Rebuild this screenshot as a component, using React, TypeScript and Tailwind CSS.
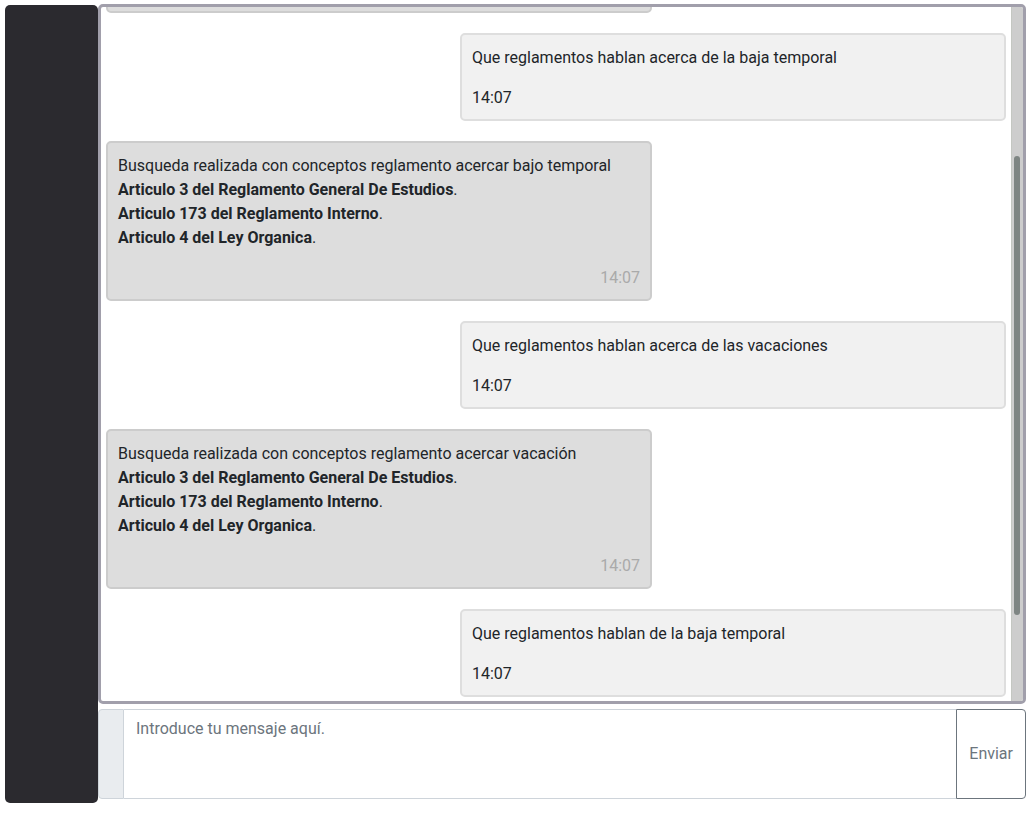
import { useState } from "react";

type Message =
  | { from: "user"; text: string; time: string }
  | { from: "bot"; text: string; articles: string[]; time: string };

const articles = [
  "Articulo 3 del Reglamento General De Estudios",
  "Articulo 173 del Reglamento Interno",
  "Articulo 4 del Ley Organica",
];

const messages: Message[] = [
  { from: "user", text: "Que reglamentos hablan acerca de la baja temporal", time: "14:07" },
  {
    from: "bot",
    text: "Busqueda realizada con conceptos reglamento acercar bajo temporal",
    articles,
    time: "14:07",
  },
  { from: "user", text: "Que reglamentos hablan acerca de las vacaciones", time: "14:07" },
  {
    from: "bot",
    text: "Busqueda realizada con conceptos reglamento acercar vacación",
    articles,
    time: "14:07",
  },
  { from: "user", text: "Que reglamentos hablan de la baja temporal", time: "14:07" },
];

function Bubble({ message }: { message: Message }) {
  if (message.from === "user") {
    return (
      <li className="mx-[5px] w-3/5 shrink-0 self-end rounded-[5px] border-2 border-[#dedede] bg-[#f1f1f1] px-2.5 pt-[11px] pb-[9px]">
        <p className="mb-4">{message.text}</p>
        <time className="block">{message.time}</time>
      </li>
    );
  }
  return (
    <li className="mx-[5px] w-3/5 shrink-0 rounded-[5px] border-2 border-[#cccccc] bg-[#dddddd] px-2.5 pt-[11px] pb-[9px]">
      <p>{message.text}</p>
      <div className="mb-4">
        {message.articles.map((article) => (
          <p key={article}>
            <strong className="font-bold">{article}</strong>.
          </p>
        ))}
      </div>
      <time className="block text-right text-[#aaaaaa]">{message.time}</time>
    </li>
  );
}

export default function App() {
  const [draft, setDraft] = useState("");

  return (
    <div className="flex h-screen bg-white px-[5px] pt-1 pb-[11px] font-['Roboto',sans-serif] text-base text-[#212529]">
      <aside className="mt-px w-[93px] shrink-0 rounded-[5px] bg-[#2b2a2f]" />
      <main className="flex min-w-0 flex-1 flex-col gap-[5px] pb-1">
        <section className="flex min-h-0 flex-1 overflow-hidden rounded-[5px] border-3 border-[#a19fab]">
          <ul className="flex min-w-0 flex-1 flex-col justify-end gap-5 overflow-hidden pb-1">
            <li className="mx-[5px] h-10 w-3/5 shrink-0 rounded-[5px] border-2 border-[#cccccc] bg-[#dddddd]" />
            {messages.map((message, index) => (
              <Bubble key={index} message={message} />
            ))}
          </ul>
          <div className="flex w-3 shrink-0 flex-col border-l border-[#c4c7c2] bg-[#cdcdcd] pl-0.5">
            <div className="basis-[21.5%]" />
            <div className="w-1.5 basis-[66.1%] rounded-full bg-[#7e8583]" />
          </div>
        </section>
        <form className="flex h-[90px] shrink-0" onSubmit={(event) => event.preventDefault()}>
          <span className="w-[26px] shrink-0 rounded-l-[4px] border border-[#ced4da] bg-[#e9ecef]" />
          <textarea
            aria-label="Mensaje"
            placeholder="Introduce tu mensaje aquí."
            value={draft}
            onChange={(event) => setDraft(event.target.value)}
            className="min-w-0 flex-1 resize-none border-y border-[#ced4da] bg-white px-3 py-[7px] outline-none placeholder:text-[#6c757d]"
          />
          <button
            type="submit"
            className="shrink-0 rounded-r-[4px] border border-[#6c757d] px-3 text-[#6c757d]"
          >
            Enviar
          </button>
        </form>
      </main>
    </div>
  );
}
